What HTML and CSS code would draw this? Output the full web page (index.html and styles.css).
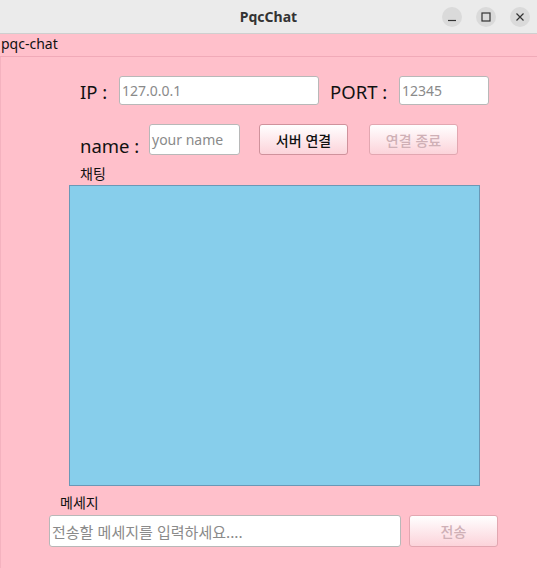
FILE: index.html
```html
<!DOCTYPE html>
<html lang="ko">
<head>
<meta charset="utf-8">
<title>PqcChat</title>
<link rel="stylesheet" href="styles.css">
</head>
<body>
<div class="window">
  <div class="titlebar">
    <div class="title">PqcChat</div>
    <div class="controls">
      <span class="ctl"><svg width="20" height="20" viewBox="0 0 20 20"><path d="M6 13.5h8" stroke="#333" stroke-width="1.2" fill="none"/></svg></span>
      <span class="ctl"><svg width="20" height="20" viewBox="0 0 20 20"><rect x="6" y="6" width="8" height="8" stroke="#333" stroke-width="1.2" fill="none"/></svg></span>
      <span class="ctl"><svg width="20" height="20" viewBox="0 0 20 20"><path d="M6.5 6.5l7 7M13.5 6.5l-7 7" stroke="#333" stroke-width="1.2" fill="none"/></svg></span>
    </div>
  </div>
  <div class="menubar">pqc-chat</div>
  <div class="main">
    <div class="row row1">
      <span class="lbl lbl-ip">IP :</span>
      <div class="input ip"><span class="ph">127.0.0.1</span></div>
      <span class="lbl lbl-port">PORT :</span>
      <div class="input port"><span class="ph">12345</span></div>
    </div>
    <div class="row row2">
      <span class="lbl lbl-name">name :</span>
      <div class="input name"><span class="ph">your name</span></div>
      <button class="btn connect">서버 연결</button>
      <button class="btn disconnect" disabled>연결 종료</button>
    </div>
    <div class="small chat-lbl">채팅</div>
    <div class="chat"></div>
    <div class="small msg-lbl">메세지</div>
    <div class="row row3">
      <div class="input msg"><span class="ph">전송할 메세지를 입력하세요....</span></div>
      <button class="btn send" disabled>전송</button>
    </div>
  </div>
</div>
</body>
</html>
```
FILE: styles.css
```css
html, body {
  margin: 0;
  padding: 0;
}
body {
  width: 537px;
  height: 568px;
  overflow: hidden;
  font-family: "Noto Sans", "Noto Sans CJK KR", sans-serif;
  background: #ffc0cb;
}
.window {
  width: 537px;
  height: 568px;
  display: flex;
  flex-direction: column;
}
.titlebar {
  height: 34px;
  background: #ebebeb;
  border-bottom: 1px solid #cfcfcf;
  box-sizing: border-box;
  display: flex;
  align-items: center;
  justify-content: center;
  position: relative;
}
.title {
  font-weight: bold;
  font-size: 14px;
  color: #333;
}
.controls {
  position: absolute;
  right: 7px;
  top: 7px;
  display: flex;
  gap: 14px;
}
.ctl {
  width: 20px;
  height: 20px;
  border-radius: 50%;
  background: #dadada;
  display: block;
}
.ctl svg { display: block; }
.menubar {
  height: 23px;
  box-sizing: border-box;
  border-bottom: 1px solid #f0aab8;
  font-size: 14px;
  line-height: 20px;
  padding-left: 1px;
  color: #111;
}
.main {
  flex: 1;
  border-left: 1px solid #f4b2bf;
  display: flex;
  flex-direction: column;
}
.row {
  display: flex;
  align-items: center;
}
.row1 {
  margin-top: 18px;
  height: 30px;
}
.lbl {
  font-size: 18.5px;
  color: #111;
}
.lbl-ip {
  margin-left: 79px;
  width: 39px;
  margin-top: 3px;
}
.lbl-port {
  margin-left: 11px;
  width: 69px;
  margin-top: 3px;
}
.input {
  background: #fff;
  border: 1px solid #b8b8b8;
  border-radius: 3px;
  box-sizing: border-box;
  display: flex;
  align-items: center;
  padding-left: 2px;
}
.ph {
  color: #8a8a8a;
  font-size: 14px;
  white-space: nowrap;
}
.ip { width: 200px; height: 29px; }
.port { width: 90px; height: 29px; }
.row2 {
  margin-top: 19px;
  height: 32px;
  align-items: flex-start;
}
.lbl-name {
  margin-left: 79px;
  width: 69px;
  margin-top: 9px;
}
.name { width: 91px; height: 31px; }
.btn {
  width: 89px;
  height: 31px;
  box-sizing: border-box;
  border: 1px solid #cf929c;
  border-radius: 3px;
  background: linear-gradient(#ffffff, #fcd3da);
  font-family: "Noto Sans CJK KR", sans-serif;
  font-size: 14px;
  font-weight: 500;
  color: #111;
  padding: 0;
}
.btn[disabled] {
  color: #cfb0b6;
  border-color: #e2a7b1;
}
.connect { margin-left: 19px; }
.disconnect { margin-left: 21px; }
.small {
  font-size: 14px;
  font-family: "Noto Sans CJK KR", sans-serif;
  color: #111;
  line-height: 18px;
}
.chat-lbl {
  margin-left: 79px;
  margin-top: 8px;
  height: 18px;
}
.chat {
  margin-left: 68px;
  margin-top: 3px;
  width: 411px;
  height: 301px;
  box-sizing: border-box;
  background: #87ceeb;
  border: 1px solid #6a98b6;
}
.msg-lbl {
  margin-left: 59px;
  margin-top: 7px;
  height: 18px;
}
.row3 {
  margin-top: 4px;
  height: 32px;
}
.msg {
  margin-left: 48px;
  width: 352px;
  height: 32px;
}
.msg .ph {
  font-family: "Noto Sans CJK KR", sans-serif;
  font-size: 15px;
}
.send { margin-left: 8px; height: 32px; }
```
